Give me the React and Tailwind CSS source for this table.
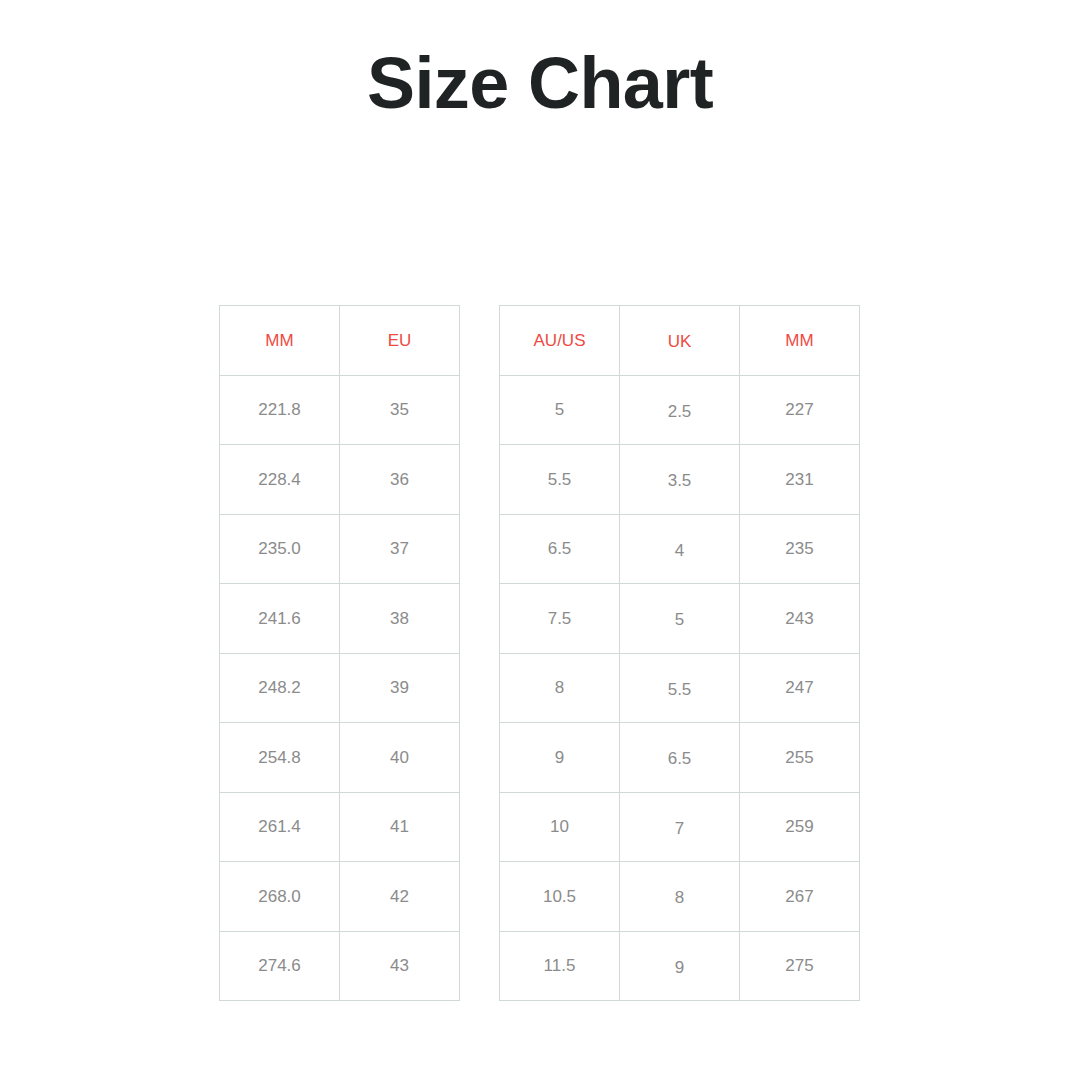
import React from "react";

const left = {
  head: ["MM", "EU"],
  rows: [
    ["221.8", "35"],
    ["228.4", "36"],
    ["235.0", "37"],
    ["241.6", "38"],
    ["248.2", "39"],
    ["254.8", "40"],
    ["261.4", "41"],
    ["268.0", "42"],
    ["274.6", "43"],
  ],
};

const right = {
  head: ["AU/US", "UK", "MM"],
  shift: 1,
  rows: [
    ["5", "2.5", "227"],
    ["5.5", "3.5", "231"],
    ["6.5", "4", "235"],
    ["7.5", "5", "243"],
    ["8", "5.5", "247"],
    ["9", "6.5", "255"],
    ["10", "7", "259"],
    ["10.5", "8", "267"],
    ["11.5", "9", "275"],
  ],
};

function Table({ data }) {
  const all = [data.head, ...data.rows];
  return (
    <div className="flex flex-col border-l border-t border-[#d0d8d8]">
      {all.map((row, i) => (
        <div key={i} className={`flex ${i % 2 === 0 ? "h-[70px]" : "h-[69px]"}`}>
          {row.map((cell, j) => (
            <div
              key={j}
              className={`w-[120px] flex items-center justify-center border-r border-b border-[#d0d8d8] text-[17px] ${
                i === 0 ? "text-[#ee4a3f]" : "text-[#8b8b8b]"
              } ${data.shift === j ? "pt-[3px]" : ""}`}
            >
              {cell}
            </div>
          ))}
        </div>
      ))}
    </div>
  );
}

export default function App() {
  return (
    <div className="w-[1080px] h-[1080px] bg-white font-['Liberation_Sans',Arial,sans-serif]">
      <h1 className="pt-[47px] text-center text-[72px] leading-[72px] font-bold tracking-[-0.6px] text-[#1f2323]">
        Size Chart
      </h1>
      <div className="flex gap-[39px] pl-[219px] mt-[186px]">
        <Table data={left} />
        <Table data={right} />
      </div>
    </div>
  );
}
